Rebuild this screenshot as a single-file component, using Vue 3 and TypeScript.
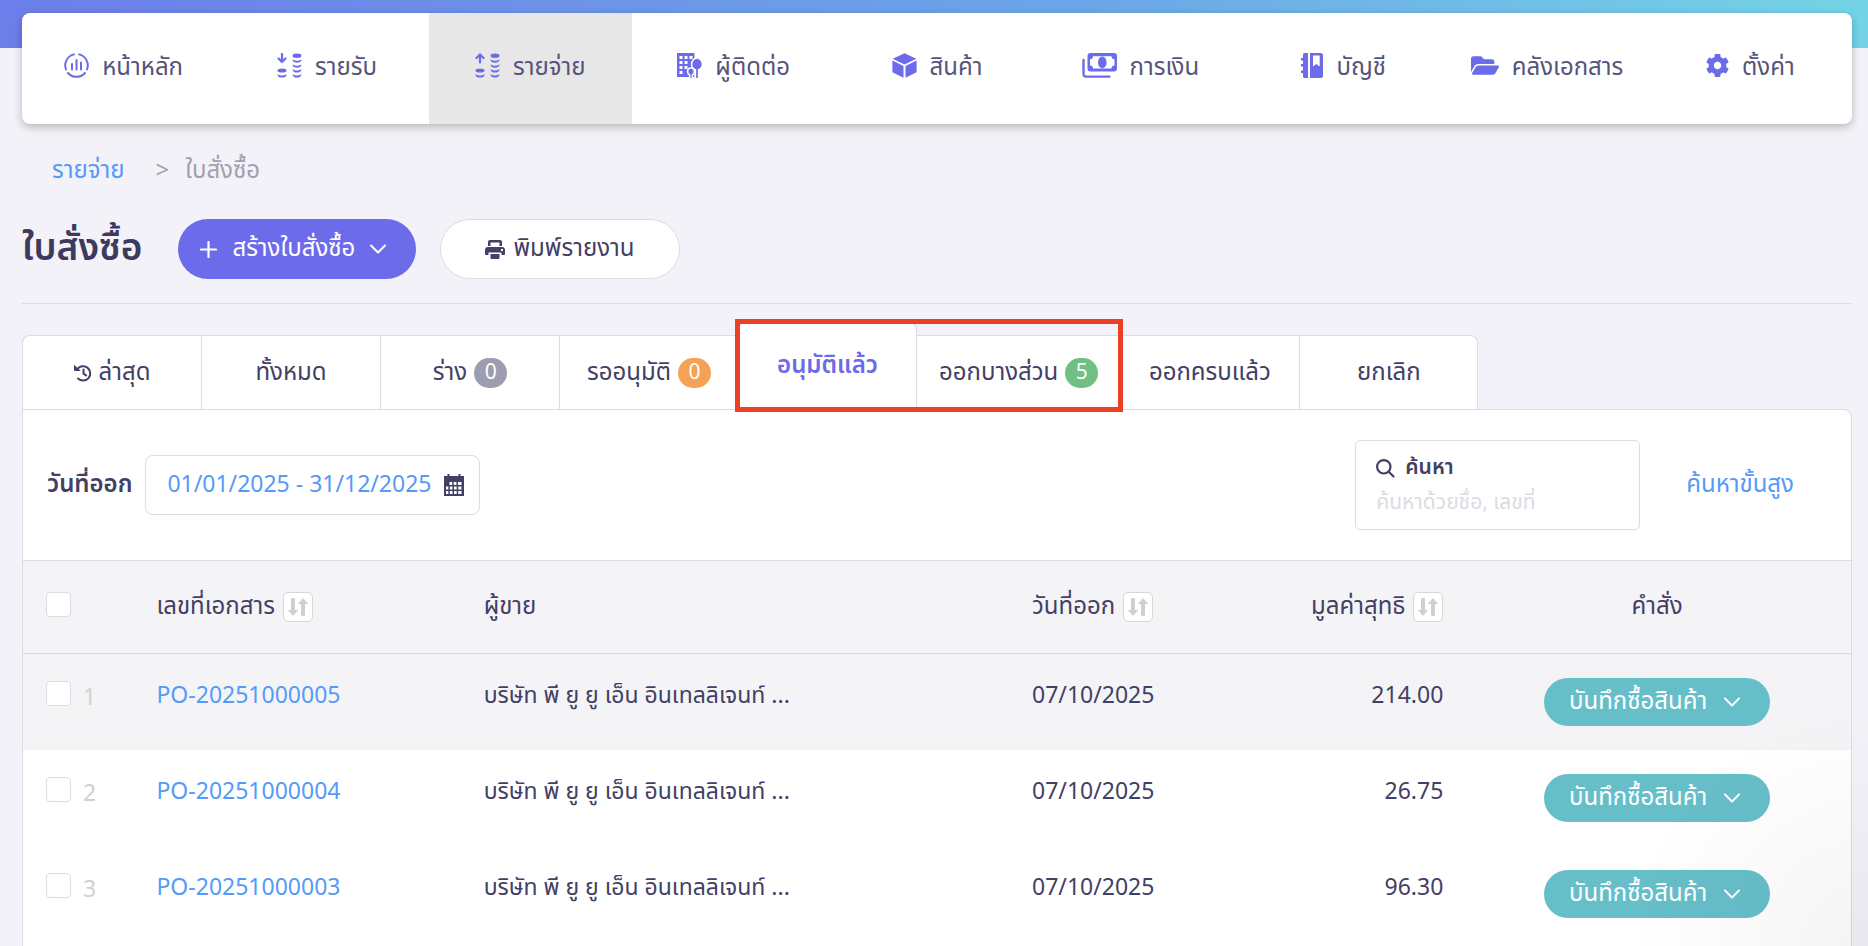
<script setup lang="ts">
import { ref } from 'vue'

type IconName = 'home' | 'income' | 'expense' | 'contact' | 'product' | 'finance' | 'account' | 'library' | 'settings'

interface NavItem {
  label: string
  icon: IconName
  width: number
  viewBox: string
  active?: boolean
}

interface Tab {
  label: string
  count?: number
  tone?: 'grey' | 'orange' | 'green'
  history?: boolean
  active?: boolean
}

interface Order {
  no: number
  doc: string
  vendor: string
  date: string
  amount: string
}

const navItems: NavItem[] = [
  { label: 'หน้าหลัก', icon: 'home', width: 25, viewBox: '0 0 25 25' },
  { label: 'รายรับ', icon: 'income', width: 25, viewBox: '0 0 25 25' },
  { label: 'รายจ่าย', icon: 'expense', width: 25, viewBox: '0 0 25 25', active: true },
  { label: 'ผู้ติดต่อ', icon: 'contact', width: 25, viewBox: '0 0 25 25' },
  { label: 'สินค้า', icon: 'product', width: 25, viewBox: '0 0 25 25' },
  { label: 'การเงิน', icon: 'finance', width: 35, viewBox: '0 0 35 25' },
  { label: 'บัญชี', icon: 'account', width: 22, viewBox: '0 0 22 25' },
  { label: 'คลังเอกสาร', icon: 'library', width: 28, viewBox: '0 32 576 448' },
  { label: 'ตั้งค่า', icon: 'settings', width: 23, viewBox: '8 0 496 512' },
]

const leadingTabs: Tab[] = [
  { label: 'ล่าสุด', history: true },
  { label: 'ทั้งหมด' },
  { label: 'ร่าง', count: 0, tone: 'grey' },
  { label: 'รออนุมัติ', count: 0, tone: 'orange' },
]
const markedTabs: Tab[] = [
  { label: 'อนุมัติแล้ว', active: true },
  { label: 'ออกบางส่วน', count: 5, tone: 'green' },
]
const trailingTabs: Tab[] = [{ label: 'ออกครบแล้ว' }, { label: 'ยกเลิก' }]
const tabGroups = [
  { key: 'leading', marked: false, tabs: leadingTabs },
  { key: 'marked', marked: true, tabs: markedTabs },
  { key: 'trailing', marked: false, tabs: trailingTabs },
]

const vendor = 'บริษัท พี ยู ยู เอ็น อินเทลลิเจนท์ ...'
const orders: Order[] = [
  { no: 1, doc: 'PO-20251000005', vendor, date: '07/10/2025', amount: '214.00' },
  { no: 2, doc: 'PO-20251000004', vendor, date: '07/10/2025', amount: '26.75' },
  { no: 3, doc: 'PO-20251000003', vendor, date: '07/10/2025', amount: '96.30' },
]

const dateRange = ref('01/01/2025 - 31/12/2025')
const keyword = ref('')
</script>

<template>
  <div class="page">
    <header class="top">
      <nav class="nav">
        <a v-for="item in navItems" :key="item.icon" href="#" class="nav-item" :class="{ active: item.active }">
          <svg class="nav-icon" :width="item.width" height="25" :viewBox="item.viewBox" aria-hidden="true">
            <g v-if="item.icon === 'home'" fill="none" stroke="currentColor" stroke-width="2" stroke-linecap="round">
              <path d="M10 1.400A11.300 11.300 0 0 0 2 16.500M15 1.400A11.300 11.300 0 0 1 23 16.500M4 20A11.300 11.300 0 0 0 21 20" />
              <path d="M8 11v5.500M12.500 7v9.500M17 9.500v7" />
            </g>
            <g v-else-if="item.icon === 'income' || item.icon === 'expense'" fill="currentColor">
              <g fill="none" stroke="currentColor" stroke-width="2.200" stroke-linecap="round" stroke-linejoin="round">
                <path v-if="item.icon === 'income'" d="M5 1v8M1.500 5.500 5 9l3.500-3.500" />
                <path v-else d="M5 9.500V2M1.500 5 5 1.500 8.500 5" />
              </g>
              <ellipse cx="5" cy="17.500" rx="4.500" ry="2" />
              <path d="M.5 21.300q4.500 2.600 9 0v.700q-.6 2.600-4.500 2.600T.5 22z" />
              <ellipse cx="20" cy="2.800" rx="4.500" ry="2.200" />
              <path d="M15.500 6.500q4.500 2.600 9 0v.5q-.6 2.800-4.500 2.800T15.500 7z" />
              <path d="M15.500 11.500q4.500 2.600 9 0v.5q-.6 2.800-4.500 2.800t-4.500-2.800z" />
              <path d="M15.500 16.300q4.500 2.600 9 0v.5q-.6 2.800-4.500 2.800t-4.500-2.800z" />
              <path d="M15.500 21.300q4.500 2.600 9 0v.5q-.6 2.800-4.500 2.800t-4.500-2.800z" />
            </g>
            <g v-else-if="item.icon === 'contact'">
              <path
                fill="currentColor"
                fill-rule="evenodd"
                d="M0 0h17.500v24H0zM2.500 3v3h3V3zM7.500 3v3h3V3zM12.500 3v3h3V3zM2.500 8v3h3V8zM7.500 8v3h3V8zM2.500 13v3h3v-3zM7.500 13v3h3v-3zM2.500 18v3h3v-3z"
              />
              <g fill="currentColor" stroke="#fff" stroke-width="1.500">
                <path d="M20 5c-3.200 0-5.400 3-5.400 6.200 0 2.700 1.600 4.800 3.800 5.600v9h3.200v-9c2-.8 3.800-2.900 3.800-5.600C25.400 8 23.200 5 20 5z" />
                <path d="M14 15c-2.200 0-3.400 1.700-3.400 3.700 0 1.400.8 2.700 2 3.300v4h2.800v-4c1.300-.6 2-1.900 2-3.300 0-2-1.200-3.700-3.400-3.700z" />
              </g>
            </g>
            <g v-else-if="item.icon === 'product'" fill="currentColor">
              <path d="M12.500.3 24.300 5.700 12.500 11.500.7 5.700z" />
              <path d="M.4 7.600 11.500 13v11.700L.4 19.300z" />
              <path d="M24.600 7.600 13.500 13v11.700l11.100-5.400z" />
            </g>
            <g v-else-if="item.icon === 'finance'">
              <path fill="none" stroke="currentColor" stroke-width="2.400" stroke-linecap="round" d="M1.500 7v14a2.500 2.500 0 0 0 2.500 2.600h23.500" />
              <path
                fill="currentColor"
                fill-rule="evenodd"
                d="M8.500 0H32a3 3 0 0 1 3 3v12.500a3 3 0 0 1-3 3H8.500a3 3 0 0 1-3-3V3a3 3 0 0 1 3-3zM11 3.200a3 3 0 0 1-3 3v6.400a3 3 0 0 1 3 3h18.500a3 3 0 0 1 3-3V6.200a3 3 0 0 1-3-3z"
              />
              <ellipse fill="currentColor" cx="20.300" cy="9.400" rx="4.300" ry="5.800" />
            </g>
            <g v-else-if="item.icon === 'account'" fill="currentColor">
              <path d="M3.500 0H7v25H3.500A1.500 1.500 0 0 1 2 23.500V20H0v-2.500h2v-4H0V11h2V7.500H0V5h2V1.500A1.500 1.500 0 0 1 3.500 0z" />
              <path fill-rule="evenodd" d="M9 0h10.500A2.500 2.500 0 0 1 22 2.500v20a2.500 2.500 0 0 1-2.500 2.500H9zM12 2.500v11l3.300-2.500 3.400 2.500v-11z" />
            </g>
            <path
              v-else-if="item.icon === 'library'"
              fill="currentColor"
              d="M572.694 292.093L500.270 416.248A63.997 63.997 0 0 1 444.989 448H45.025c-18.523 0-30.064-20.093-20.731-36.093l72.424-124.155A64 64 0 0 1 152 256h399.964c18.523 0 30.064 20.093 20.730 36.093zM152 224h328v-48c0-26.510-21.490-48-48-48H272l-64-64H48C21.490 64 0 85.490 0 112v278.046l69.077-118.418C86.214 242.250 117.989 224 152 224z"
            />
            <path
              v-else
              fill="currentColor"
              d="M487.400 315.700l-42.600-24.600c4.300-23.200 4.300-47 0-70.200l42.600-24.600c4.900-2.800 7.100-8.600 5.500-14-11.100-35.600-30-67.800-54.700-94.600-3.800-4.100-10-5.100-14.800-2.300L380.800 110c-17.900-15.400-38.500-27.300-60.800-35.100V25.800c0-5.600-3.900-10.500-9.400-11.700-36.700-8.200-74.300-7.800-109.200 0-5.500 1.200-9.400 6.100-9.400 11.700V75c-22.200 7.900-42.800 19.800-60.800 35.100L88.700 85.500c-4.900-2.800-11-1.900-14.800 2.300-24.700 26.700-43.600 58.900-54.700 94.600-1.700 5.400.6 11.200 5.500 14L67.300 221c-4.300 23.200-4.300 47 0 70.200l-42.600 24.600c-4.900 2.800-7.100 8.600-5.500 14 11.100 35.600 30 67.800 54.700 94.600 3.800 4.100 10 5.100 14.800 2.300l42.600-24.600c17.900 15.400 38.500 27.300 60.800 35.100v49.200c0 5.600 3.900 10.500 9.400 11.700 36.700 8.200 74.300 7.800 109.200 0 5.500-1.200 9.400-6.100 9.400-11.700v-49.200c22.200-7.900 42.800-19.800 60.800-35.100l42.600 24.600c4.900 2.800 11 1.900 14.800-2.300 24.700-26.700 43.600-58.900 54.700-94.600 1.500-5.500-.7-11.300-5.600-14.100zM256 336c-44.100 0-80-35.900-80-80s35.900-80 80-80 80 35.900 80 80-35.900 80-80 80z"
            />
          </svg>
          <span>{{ item.label }}</span>
        </a>
      </nav>
    </header>

    <main class="content">
      <div class="crumbs">
        <a href="#">รายจ่าย</a>
        <span class="crumb-sep">&gt;</span>
        <span>ใบสั่งซื้อ</span>
      </div>

      <div class="heading">
        <h1>ใบสั่งซื้อ</h1>
        <button type="button" class="btn btn-create">
          <svg width="17" height="17" viewBox="0 0 17 17" aria-hidden="true">
            <path d="M8.500 1v15M1 8.500h15" fill="none" stroke="currentColor" stroke-width="2.200" stroke-linecap="round" />
          </svg>
          <span>สร้างใบสั่งซื้อ</span>
          <svg width="16" height="10" viewBox="0 0 16 10" aria-hidden="true">
            <path d="m1 1.500 7 7 7-7" fill="none" stroke="currentColor" stroke-width="2" stroke-linecap="round" stroke-linejoin="round" />
          </svg>
        </button>
        <button type="button" class="btn btn-print">
          <svg width="20" height="19" viewBox="0 0 20 19" aria-hidden="true">
            <path fill="currentColor" fill-rule="evenodd" d="M5 0h10a2 2 0 0 1 2 2v4h-2.500V2.500h-9V6H3V2a2 2 0 0 1 2-2z" />
            <path fill="currentColor" fill-rule="evenodd" d="M3 7h14a3 3 0 0 1 3 3v4a1 1 0 0 1-1 1h-2.500v-2.500h-13V15H1a1 1 0 0 1-1-1v-4a3 3 0 0 1 3-3zm13 2v2h2V9z" />
            <path fill="currentColor" d="M5.500 14h9v4a1 1 0 0 1-1 1h-7a1 1 0 0 1-1-1z" />
          </svg>
          <span>พิมพ์รายงาน</span>
        </button>
      </div>

      <div class="tabs" role="tablist">
        <div v-for="group in tabGroups" :key="group.key" class="tab-group" :class="{ marked: group.marked }">
          <button
            v-for="tab in group.tabs"
            :key="tab.label"
            type="button"
            role="tab"
            class="tab"
            :class="{ active: tab.active }"
            :aria-selected="!!tab.active"
          >
            <svg v-if="tab.history" width="18" height="18" viewBox="0 0 18 18" aria-hidden="true">
              <g fill="none" stroke="currentColor" stroke-width="2" stroke-linecap="round" stroke-linejoin="round">
                <path d="M3 5.500A7.200 7.200 0 1 1 4 14.500M9.500 5.500v4.200l2.600 1.700" />
              </g>
              <path fill="currentColor" d="M0 .8 6.800 7H1a1 1 0 0 1-1-1z" />
            </svg>
            <span>{{ tab.label }}</span>
            <span v-if="tab.count !== undefined" class="badge" :class="tab.tone">{{ tab.count }}</span>
          </button>
        </div>
      </div>

      <section class="panel">
        <div class="filters">
          <label for="date-range" class="date-label">วันที่ออก</label>
          <div class="date-box">
            <input id="date-range" v-model="dateRange" type="text" />
            <svg width="20" height="22" viewBox="0 0 20 22" aria-hidden="true">
              <path
                fill="currentColor"
                fill-rule="evenodd"
                d="M3.500 0h2v2h9V0h2v2H20v20H0V2h3.500zM5.500 8v3h2.700V8zM9.700 8v3h2.700V8zM13.900 8v3h3.600V8zM2 12.500v3h2.300v-3zM5.800 12.500v3h2.700v-3zM10 12.500v3h2.700v-3zM14.200 12.500v3h3.300v-3zM2 17v3h2.300v-3zM5.800 17v3h2.700v-3zM10 17v3h2.700v-3zM14.200 17v3h3.300v-3z"
              />
            </svg>
          </div>
          <div class="search-box">
            <label for="keyword">
              <svg width="19" height="19" viewBox="0 0 19 19" aria-hidden="true">
                <path d="M12.700 12.700 17.500 17.500M14.500 7.800a6.700 6.700 0 1 1-13.400 0 6.700 6.700 0 0 1 13.400 0z" fill="none" stroke="currentColor" stroke-width="2.200" stroke-linecap="round" />
              </svg>
              <span>ค้นหา</span>
            </label>
            <input id="keyword" v-model="keyword" type="text" placeholder="ค้นหาด้วยชื่อ, เลขที่" />
          </div>
          <a href="#" class="advanced">ค้นหาขั้นสูง</a>
        </div>

        <table class="orders">
          <colgroup>
            <col class="c-check" />
            <col class="c-doc" />
            <col class="c-vendor" />
            <col class="c-date" />
            <col class="c-amount" />
            <col />
          </colgroup>
          <thead>
            <tr>
              <th class="check"><input type="checkbox" aria-label="เลือกทั้งหมด" /></th>
              <th>
                <span class="sortable">
                  เลขที่เอกสาร
                  <button type="button" class="sort" aria-label="เรียงเลขที่เอกสาร">
                    <svg width="22" height="18" viewBox="0 0 22 18" aria-hidden="true">
                      <path fill="currentColor" d="M4 1q0-1 1-1h2q1 0 1 1v11h3.200L6 18 .8 12H4zM14 17q0 1 1 1h2q1 0 1-1V6h3.200L16 0l-5.200 6H14z" />
                    </svg>
                  </button>
                </span>
              </th>
              <th>ผู้ขาย</th>
              <th>
                <span class="sortable">
                  วันที่ออก
                  <button type="button" class="sort" aria-label="เรียงวันที่ออก">
                    <svg width="22" height="18" viewBox="0 0 22 18" aria-hidden="true">
                      <path fill="currentColor" d="M4 1q0-1 1-1h2q1 0 1 1v11h3.200L6 18 .8 12H4zM14 17q0 1 1 1h2q1 0 1-1V6h3.200L16 0l-5.200 6H14z" />
                    </svg>
                  </button>
                </span>
              </th>
              <th class="amount">
                <span class="sortable">
                  มูลค่าสุทธิ
                  <button type="button" class="sort" aria-label="เรียงมูลค่าสุทธิ">
                    <svg width="22" height="18" viewBox="0 0 22 18" aria-hidden="true">
                      <path fill="currentColor" d="M4 1q0-1 1-1h2q1 0 1 1v11h3.200L6 18 .8 12H4zM14 17q0 1 1 1h2q1 0 1-1V6h3.200L16 0l-5.200 6H14z" />
                    </svg>
                  </button>
                </span>
              </th>
              <th class="action">คำสั่ง</th>
            </tr>
          </thead>
          <tbody>
            <tr v-for="order in orders" :key="order.no">
              <td class="check">
                <label><input type="checkbox" /><span>{{ order.no }}</span></label>
              </td>
              <td><a href="#">{{ order.doc }}</a></td>
              <td>{{ order.vendor }}</td>
              <td>{{ order.date }}</td>
              <td class="amount">{{ order.amount }}</td>
              <td class="action">
                <button type="button" class="btn-record">
                  <span>บันทึกซื้อสินค้า</span>
                  <svg width="16" height="10" viewBox="0 0 16 10" aria-hidden="true">
                    <path d="m1 1.500 7 7 7-7" fill="none" stroke="currentColor" stroke-width="2" stroke-linecap="round" stroke-linejoin="round" />
                  </svg>
                </button>
              </td>
            </tr>
          </tbody>
        </table>
      </section>
    </main>
  </div>
</template>

<style>
body {
  margin: 0;
  background: #f3f2f8;
}
</style>

<style scoped>
* {
  box-sizing: border-box;
}
.page {
  position: relative;
  min-height: 100vh;
  display: flex;
  flex-direction: column;
  background: linear-gradient(90deg, #6c7ee9, #6ca8e8 60%, #74d4e6) no-repeat 0 0 / 100% 48px;
  padding: 13px 16px 0 22px;
  font-family: 'Noto Sans Thai', 'Noto Sans', 'Open Sans', sans-serif;
  font-size: 24px;
  font-weight: 400;
  line-height: 30px;
  color: #424066;
}
.page::after {
  content: '';
  position: absolute;
  right: 0;
  bottom: 0;
  width: 240px;
  height: 240px;
  background: radial-gradient(circle 240px at 100% 100%, rgba(40, 40, 60, 0.05), rgba(40, 40, 60, 0));
  pointer-events: none;
}
button,
input {
  font: inherit;
  color: inherit;
}
button {
  cursor: pointer;
}
a {
  color: #569af8;
  text-decoration: none;
}
svg {
  flex: none;
}
.nav {
  display: grid;
  grid-template-columns: repeat(9, 1fr);
  height: 111px;
  border-radius: 8px;
  background: #fff;
  box-shadow: 0 3px 8px rgba(0, 0, 0, 0.25);
  overflow: hidden;
}
.nav-item {
  display: flex;
  align-items: center;
  justify-content: center;
  gap: 13px;
  padding-bottom: 6px;
  color: #56547a;
  white-space: nowrap;
}
.nav-item span {
  padding-top: 5px;
}
.nav-item.active {
  background: #e7e7e8;
}
.nav-icon {
  color: #6c6be9;
}
.content {
  flex: 1;
  display: flex;
  flex-direction: column;
}
.crumbs {
  display: flex;
  padding: 32px 30px 0;
  color: #a1a0b0;
}
.crumb-sep {
  margin: 0 16px 0 31px;
}
.heading {
  display: flex;
  align-items: center;
  gap: 24px;
  padding: 33px 0 24px;
  border-bottom: 1px solid #dcdbe4;
}
h1 {
  margin: 0 12px 0 0;
  font-size: 37px;
  line-height: 60px;
  font-weight: 600;
  color: #3c3a5e;
}
.btn {
  height: 60px;
  display: flex;
  align-items: center;
  border-radius: 30px;
  white-space: nowrap;
}
.btn-create {
  gap: 15px;
  padding: 0 30px 0 22px;
  border: 0;
  background: #6c6be9;
  color: #fff;
}
.btn-print {
  gap: 8px;
  padding: 0 44px;
  border: 1px solid #dcdbe6;
  background: #fff;
}
.tabs {
  display: flex;
  align-items: flex-end;
  margin-top: 18px;
}
.tab-group {
  position: relative;
  display: flex;
  align-items: flex-end;
}
.marked {
  z-index: 1;
}
.marked::after {
  content: '';
  position: absolute;
  inset: -3px -3px -3px -3px;
  border: 5px solid #eb4024;
  pointer-events: none;
}
.tab {
  display: flex;
  align-items: center;
  justify-content: center;
  gap: 7px;
  min-width: 179px;
  height: 74px;
  padding: 0 22px;
  border: solid #dcdbe6;
  border-width: 1px 0 0 1px;
  background: #fff;
  white-space: nowrap;
}
.tab-group:first-child .tab:first-child {
  border-top-left-radius: 8px;
}
.tab-group:last-child .tab:last-child {
  border-right-width: 1px;
  border-top-right-radius: 8px;
}
.tab-group:last-child .tab:first-child {
  border-left-width: 0;
}
.tab.active {
  height: 87px;
  border-right-width: 1px;
  border-radius: 8px 8px 0 0;
  color: #6c6be9;
  font-weight: 600;
}
.tab.active + .tab {
  border-left-width: 0;
}
.badge {
  min-width: 33px;
  height: 30px;
  border-radius: 15px;
  font-size: 21px;
  color: #fff;
}
.grey {
  background: #9d9db1;
}
.orange {
  background: #f3a353;
}
.green {
  background: #6fc082;
}
.panel {
  flex: 1;
  border: solid #dcdbe6;
  border-width: 1px 1px 0;
  border-top-right-radius: 8px;
  background: #fff;
}
.filters {
  display: flex;
  align-items: center;
  padding: 30px 57px 30px 24px;
}
.date-label {
  margin-right: 13px;
  font-weight: 600;
}
.date-box {
  display: flex;
  align-items: center;
  width: 335px;
  height: 60px;
  padding: 0 15px 0 21px;
  border: 1px solid #dcdbe6;
  border-radius: 8px;
}
.date-box input {
  flex: 1;
  min-width: 0;
  padding: 0;
  border: 0;
  outline: 0;
  background: none;
  color: #569af8;
}
.search-box {
  width: 285px;
  height: 90px;
  margin-left: auto;
  padding: 12px 20px;
  border: 1px solid #dcdbe6;
  border-radius: 5px;
}
.search-box label {
  display: flex;
  align-items: center;
  gap: 10px;
  font-size: 21px;
  font-weight: 600;
}
.search-box input {
  display: block;
  width: 100%;
  height: 38px;
  padding: 0;
  border: 0;
  outline: 0;
  background: none;
  font-size: 21px;
}
.search-box input::placeholder {
  color: #dcdbe3;
  opacity: 1;
}
.advanced {
  margin-left: 46px;
}
.date-box input,
tbody td {
  font-size: 23px;
}
.orders {
  width: 100%;
  table-layout: fixed;
  border-collapse: collapse;
  border-top: 1px solid #dcdbe6;
}
.c-check {
  width: 7.3%;
}
.c-doc {
  width: 17.9%;
}
.c-vendor {
  width: 30%;
}
.c-date {
  width: 9.2%;
}
.c-amount {
  width: 13.3%;
}
th,
td {
  padding: 0;
  font-weight: inherit;
  text-align: left;
  white-space: nowrap;
}
thead tr {
  height: 93px;
  background: #f4f4f6;
  border-bottom: 1px solid #d9d9df;
}
tbody tr {
  height: 96px;
}
tbody tr:first-child {
  background: #f4f4f6;
}
tbody td {
  padding-top: 27px;
  vertical-align: top;
}
.sortable {
  display: inline-flex;
  align-items: center;
  gap: 8px;
}
.sort {
  display: flex;
  align-items: center;
  justify-content: center;
  width: 30px;
  height: 30px;
  padding: 0;
  border: 1px solid #d6d6d6;
  border-radius: 5px;
  background: #fff;
  color: #d0d0d0;
}
.check {
  padding-left: 23px;
}
th.check {
  padding-bottom: 6px;
}
.check label {
  display: flex;
  align-items: flex-start;
  gap: 12px;
  color: #d0d0d3;
}
.check label span {
  padding-top: 2px;
}
input[type='checkbox'] {
  appearance: none;
  display: block;
  width: 25px;
  height: 25px;
  margin: 0;
  border: 1px solid #dcdbe6;
  border-radius: 4px;
  background: #fff;
}
.amount {
  text-align: right;
}
.action {
  padding-left: 20px;
  text-align: center;
}
tbody td.action {
  padding-top: 24px;
}
.btn-record {
  display: inline-flex;
  align-items: center;
  gap: 17px;
  height: 48px;
  padding: 0 30px 0 25px;
  border: 0;
  border-radius: 24px;
  background: #66bec9;
  color: #fff;
  font-size: 24px;
}
</style>
